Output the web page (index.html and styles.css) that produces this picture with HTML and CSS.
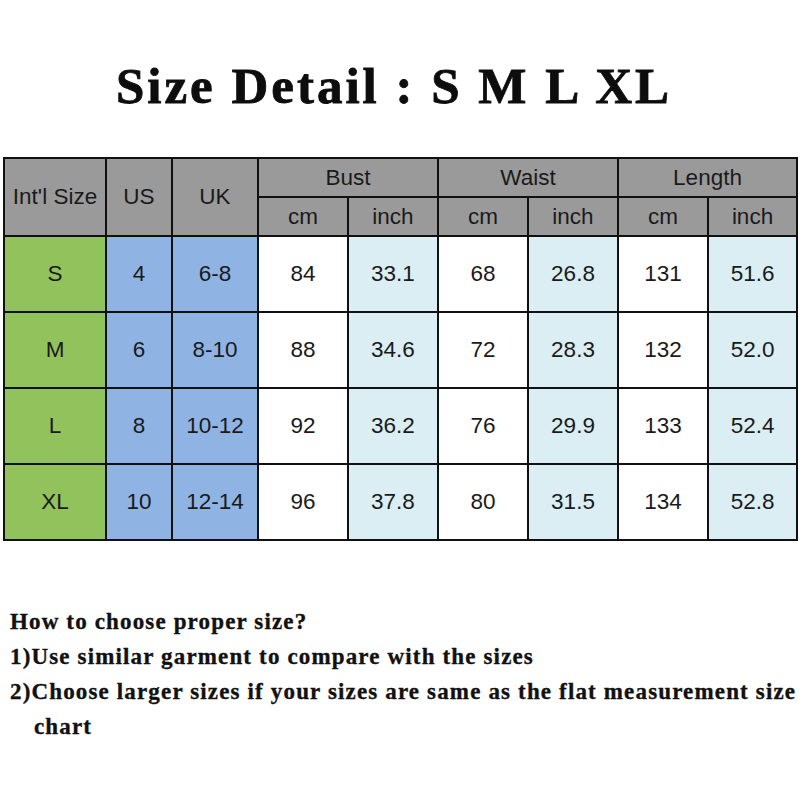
FILE: index.html
```html
<!DOCTYPE html>
<html>
<head>
<meta charset="utf-8">
<link rel="stylesheet" href="styles.css">
</head>
<body>
<div class="page">
  <h1 class="title">Size Detail : S M L XL</h1>
  <table class="chart">
    <colgroup>
      <col class="c-intl"><col class="c-us"><col class="c-uk">
      <col class="c-m"><col class="c-m"><col class="c-m"><col class="c-m"><col class="c-m"><col class="c-last">
    </colgroup>
    <thead>
      <tr class="hr1">
        <th rowspan="2">Int'l Size</th>
        <th rowspan="2">US</th>
        <th rowspan="2">UK</th>
        <th colspan="2">Bust</th>
        <th colspan="2">Waist</th>
        <th colspan="2">Length</th>
      </tr>
      <tr class="hr2">
        <th>cm</th><th>inch</th><th>cm</th><th>inch</th><th>cm</th><th>inch</th>
      </tr>
    </thead>
    <tbody>
      <tr><td class="g">S</td><td class="b">4</td><td class="b">6-8</td><td>84</td><td class="l">33.1</td><td>68</td><td class="l">26.8</td><td>131</td><td class="l">51.6</td></tr>
      <tr><td class="g">M</td><td class="b">6</td><td class="b">8-10</td><td>88</td><td class="l">34.6</td><td>72</td><td class="l">28.3</td><td>132</td><td class="l">52.0</td></tr>
      <tr><td class="g">L</td><td class="b">8</td><td class="b">10-12</td><td>92</td><td class="l">36.2</td><td>76</td><td class="l">29.9</td><td>133</td><td class="l">52.4</td></tr>
      <tr><td class="g">XL</td><td class="b">10</td><td class="b">12-14</td><td>96</td><td class="l">37.8</td><td>80</td><td class="l">31.5</td><td>134</td><td class="l">52.8</td></tr>
    </tbody>
  </table>
  <div class="notes">
    <p class="note">How to choose proper size?</p>
    <p class="note">1)Use similar garment to compare with the sizes</p>
    <p class="note">2)Choose larger sizes if your sizes are same as the flat measurement size</p>
    <p class="note indent">chart</p>
  </div>
</div>
</body>
</html>
```
FILE: styles.css
```css
html, body {
  margin: 0;
  padding: 0;
  background: #ffffff;
}
.page {
  width: 800px;
  height: 800px;
  display: flex;
  flex-direction: column;
}
.title {
  margin: 58px 0 0 0;
  height: 99px;
  text-align: center;
  font-family: "Liberation Serif", serif;
  font-weight: 900;
  font-size: 51px;
  line-height: 56px;
  letter-spacing: 3px;
  color: #0d0d0d;
  -webkit-text-stroke: 0.8px #0d0d0d;
  padding-right: 12px;
}
.chart {
  margin-left: 3px;
  width: 793px;
  border-collapse: collapse;
  table-layout: fixed;
  font-family: "Liberation Sans", Arial, sans-serif;
  font-size: 22.5px;
  color: #1a1a1a;
}
.c-intl { width: 102px; }
.c-us { width: 66px; }
.c-uk { width: 86px; }
.c-m { width: 90px; }
.c-last { width: 89px; }
.chart th, .chart td {
  border: 2px solid #111;
  text-align: center;
  padding: 0;
  font-weight: normal;
}
.chart th {
  background: #9a9a9a;
}
.hr1 th { height: 37px; }
.hr2 th { height: 37px; }
.chart td { height: 74px; background: #ffffff; }
.chart td.g { background: #92c25c; }
.chart td.b { background: #8fb4e3; }
.chart td.l { background: #daeef3; }
.notes {
  margin-top: 63px;
  padding-left: 10px;
  font-family: "Liberation Serif", serif;
  font-weight: bold;
  font-size: 23px;
  color: #111;
  -webkit-text-stroke: 0.35px #111;
}
.note {
  margin: 0;
  line-height: 35px;
  letter-spacing: 1.15px;
  white-space: nowrap;
}
.indent {
  padding-left: 24px;
}
```
